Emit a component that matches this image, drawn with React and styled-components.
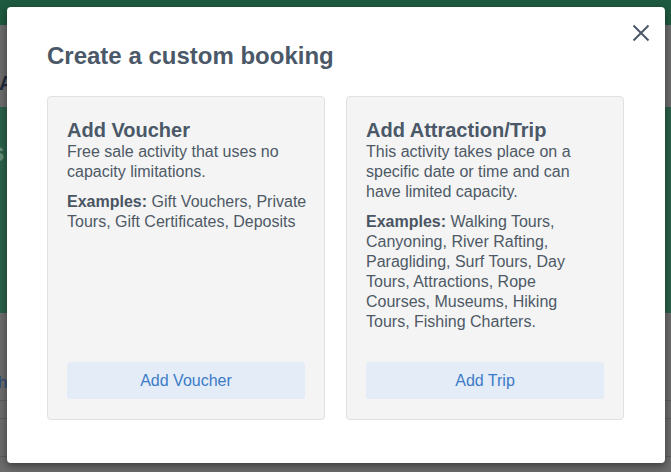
import React from "react";
import styled, { createGlobalStyle } from "styled-components";

const GlobalStyle = createGlobalStyle`
  html, body { margin: 0; padding: 0; }
  body {
    font-family: "Liberation Sans", Arial, Helvetica, sans-serif;
    overflow: hidden;
  }
`;

const Page = styled.div`
  position: relative;
  width: 671px;
  height: 472px;
  overflow: hidden;
  background: #6c6c6c;
`;

const TopBar = styled.div`
  height: 25px;
  background: #1e5a3f;
`;

const PageTitleRow = styled.div`
  height: 82px;
  box-sizing: border-box;
  padding-top: 46px;
  font-size: 20px;
  font-weight: bold;
  color: #1f2a3c;
  line-height: 24px;
  text-indent: -1px;
`;

const Banner = styled.div`
  height: 206px;
  background: #2a614a;
  box-sizing: border-box;
  padding-top: 30px;
  font-size: 26px;
  font-weight: bold;
  color: #668e7e;
  text-indent: -10px;
`;

const PageContent = styled.div`
  display: flex;
  flex-direction: column;
`;

const LinkRow = styled.div`
  height: 88px;
  box-sizing: border-box;
  padding-top: 60px;
  font-size: 17px;
  line-height: 20px;
  color: #2b4a7a;
  border-bottom: 1px solid #5a5c63;
  text-indent: -2px;
`;

const TableRow = styled.div`
  height: ${(p) => p.$h}px;
  border-bottom: 1px solid #5a5c63;
`;

const Modal = styled.div`
  position: absolute;
  top: 7px;
  left: 7px;
  width: 658px;
  height: 456px;
  box-sizing: border-box;
  background: #ffffff;
  border-radius: 4px;
  box-shadow: 0 3px 9px rgba(0, 0, 0, 0.45);
  padding: 36px 41px 0 40px;
`;

const CloseButton = styled.button`
  position: absolute;
  top: 14px;
  right: 12px;
  width: 24px;
  height: 24px;
  padding: 0;
  border: 0;
  background: transparent;
  display: flex;
  align-items: center;
  justify-content: center;
  cursor: pointer;
`;

const Title = styled.h2`
  margin: 0;
  font-size: 24px;
  line-height: 26px;
  font-weight: bold;
  color: #4a5868;
`;

const Cards = styled.div`
  margin-top: 27px;
  display: grid;
  grid-template-columns: 278px 278px;
  column-gap: 21px;
  align-items: stretch;
`;

const Card = styled.div`
  display: flex;
  flex-direction: column;
  box-sizing: border-box;
  background: #f4f4f4;
  border: 1px solid #e1e1e1;
  border-radius: 4px;
  padding: 22px ${(p) => p.$padRight}px 20px 19px;
`;

const CardTitle = styled.h3`
  margin: 0;
  font-size: 20px;
  line-height: 23px;
  font-weight: bold;
  color: #4a5868;
`;

const Text = styled.p`
  margin: 0 0 ${(p) => (p.$last ? 0 : 10)}px 0;
  font-size: 16px;
  line-height: 20px;
  color: #4e5966;

  strong {
    font-weight: bold;
    color: #4a5563;
  }
`;

const ActionButton = styled.button`
  margin-top: auto;
  width: 238px;
  height: 37px;
  border: 0;
  border-radius: 3px;
  background: #e4ecf7;
  color: #3b7bc8;
  font-family: "Liberation Sans", Arial, Helvetica, sans-serif;
  font-size: 16px;
  line-height: 20px;
  padding: 1px 0 0;
  cursor: pointer;
`;

const Spacer = styled.div`
  height: 30px;
  flex: 0 0 auto;
  margin-top: auto;
`;

const CloseIcon = () => (
  <svg width="18" height="18" viewBox="0 0 18 18" aria-hidden="true">
    <path
      d="M1.5 1.5 L16.5 16.5 M16.5 1.5 L1.5 16.5"
      stroke="#4a5868"
      strokeWidth="2"
      strokeLinecap="butt"
      fill="none"
    />
  </svg>
);

const cards = [
  {
    title: "Add Voucher",
    desc: "Free sale activity that uses no capacity limitations.",
    examples: "Gift Vouchers, Private Tours, Gift Certificates, Deposits",
    button: "Add Voucher",
    padRight: 16,
  },
  {
    title: "Add Attraction/Trip",
    desc: "This activity takes place on a specific date or time and can have limited capacity.",
    examples:
      "Walking Tours, Canyoning, River Rafting, Paragliding, Surf Tours, Day Tours, Attractions, Rope Courses, Museums, Hiking Tours, Fishing Charters.",
    button: "Add Trip",
    padRight: 19,
  },
];

export default function App() {
  return (
    <>
      <GlobalStyle />
      <Page>
        <TopBar />
        <PageTitleRow>A</PageTitleRow>
        <Banner>s</Banner>
        <PageContent>
          <LinkRow>h</LinkRow>
          <TableRow $h={17} />
          <TableRow $h={37} />
        </PageContent>

        <Modal role="dialog" aria-label="Create a custom booking">
          <CloseButton aria-label="Close">
            <CloseIcon />
          </CloseButton>
          <Title>Create a custom booking</Title>
          <Cards>
            {cards.map((c) => (
              <Card key={c.title} $padRight={c.padRight}>
                <CardTitle>{c.title}</CardTitle>
                <Text>{c.desc}</Text>
                <Text $last>
                  <strong>Examples:</strong> {c.examples}
                </Text>
                <Spacer />
                <ActionButton>{c.button}</ActionButton>
              </Card>
            ))}
          </Cards>
        </Modal>
      </Page>
    </>
  );
}
